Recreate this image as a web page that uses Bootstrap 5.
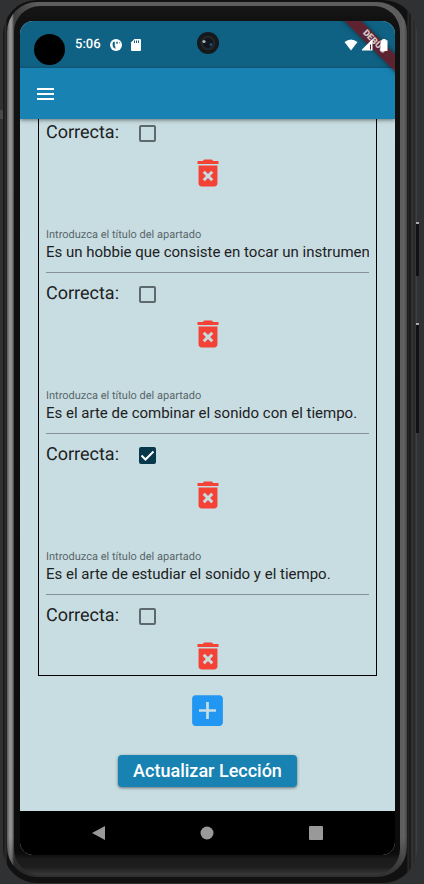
<!DOCTYPE html>
<html lang="es">
<head>
<meta charset="utf-8">
<meta name="viewport" content="width=device-width, initial-scale=1">
<title>Actualizar Lección</title>
<link href="https://cdn.jsdelivr.net/npm/bootstrap@5.3.0/dist/css/bootstrap.min.css" rel="stylesheet">
<style>
  body { background: #303133; font-family: Roboto, "Liberation Sans", sans-serif; color: #1c2123; text-rendering: geometricPrecision; }
  svg { display: block; }

  /* Device frame, from the outside in */
  .shell { margin: 0 7px 2px 3px; padding: 2px 10px 6px 4px; border-radius: 34px;
    background: linear-gradient(to right, #141414 0, #303030 3px, #111 4px, #111 calc(100% - 10px), #2d2d2d calc(100% - 9px), #151515 calc(100% - 7px), #383838 calc(100% - 5px), #262626 calc(100% - 3px), #444 100%); }
  .rim { padding: 4px 7px 2px 7px; border-radius: 30px;
    background: linear-gradient(to bottom, transparent 0, transparent calc(100% - 40px), rgba(0, 0, 0, .5) 100%),
      linear-gradient(to right, #5a5a5a 0, #959595 3px, #8a8a8a 5px, #3c3c3c 7px, #5d5d5d 30px, #5d5d5d calc(100% - 7px), #626262 calc(100% - 3px), #454545 100%); }
  .bezel { padding: 15px 5px 20px 6px; border-radius: 26px;
    background: linear-gradient(to bottom, #161616 0, #111 15px, #0c0c0c calc(100% - 22px), #1b1b1b calc(100% - 16px), #1d1d1d calc(100% - 8px), #393939 100%); }
  .side-key { position: absolute; right: 5px; width: 3px; background: #111; border-top: 2px solid #aaa; }
  .key-power { top: 222px; height: 54px; }
  .key-volume { top: 323px; height: 110px; }
  .seam { position: absolute; left: 0; top: 110px; width: 3px; height: 9px; background: #484848; }

  .screen { background: #c8dde1; border-radius: 13px; }
  .status { height: 47px; background: #106284; padding: 0 7px 0 14px; }
  .punch { width: 31px; height: 31px; background: #000; margin-top: 9px; }
  .clock { font-size: 13px; line-height: 16px; font-weight: 500; margin-left: 10px; margin-right: 9px; }
  .status-icon { position: relative; z-index: 4; }
  .lens { position: absolute; left: 50%; top: 11px; margin-left: -11px; }
  .ribbon { position: absolute; top: 15px; right: -29px; width: 100px; height: 12px; line-height: 12px;
    transform: rotate(45deg); background: rgba(112, 20, 28, .8); box-shadow: 0 0 5px rgba(0, 0, 0, .5);
    color: #d6c5c9; font-size: 9px; font-weight: 900; z-index: 3; }
  .app-bar { height: 51px; background: #1883b2; padding: 0 14px; box-shadow: 0 1px 4px rgba(0, 0, 0, .5); z-index: 2; }

  .answers { margin: 0 18px; padding: 0 7px 1px; border: 1px solid #000; border-top: 0; }
  .tick-row { height: 28px; font-size: 18px; line-height: 28px; }
  .tick-row label { width: 93px; }
  .tick-row .form-check-input { width: 17px; height: 17px; margin: 0; border: 2px solid #5d696d; border-radius: 2px; background-color: transparent; }
  .tick-row .form-check-input:checked { background-color: #07374a; border-color: #07374a; background-size: 17px;
    background-image: url("data:image/svg+xml,%3csvg xmlns='http://www.w3.org/2000/svg' viewBox='0 0 17 17'%3e%3cpath d='M2.500 8.500 6.500 12.500 14.500 4.500' fill='none' stroke='%23fff' stroke-width='2'/%3e%3c/svg%3e"); }
  .tool { margin-top: 8px; }
  .field { margin-top: 37px; height: 45px; border-bottom: 1px solid #859398; margin-bottom: 7px; }
  .field label { font-size: 11px; line-height: 14px; color: #59666a; }
  .field .form-control { font-size: 15px; line-height: 20px; height: 20px; color: #1c2123; }
  .add { margin-top: 14px; }
  .save { margin-top: 24px; margin-bottom: 24px; padding: 4px 15px; line-height: 24px; font-size: 18px; font-weight: 500;
    background: #1883b2; border-radius: 4px; box-shadow: 0 1px 3px rgba(0, 0, 0, .5); }
  .sys-nav { height: 44px; background: #000; padding: 0 72px 0 71px; }
</style>
<script src="https://cdn.jsdelivr.net/npm/bootstrap@5.3.0/dist/js/bootstrap.bundle.min.js"></script>
</head>
<body class="position-relative">
<svg class="d-none" aria-hidden="true">
  <symbol id="trash" viewBox="0 0 24 24"><path d="M5.700 19c0 1.100.9 2 2 2h8.600c1.100 0 2-.9 2-2V7H5.700v12zm2.760-7.120 1.410-1.410L12 12.590l2.120-2.120 1.410 1.410L13.410 14l2.120 2.120-1.410 1.410L12 15.410l-2.120 2.120-1.410-1.410L10.590 14l-2.130-2.120zM15.500 4l-1-1h-5l-1 1H5v2h14V4z"/></symbol>
</svg>
<span class="seam"></span>
<span class="side-key key-power"></span>
<span class="side-key key-volume"></span>
<div class="shell">
<div class="rim">
<div class="bezel">
<div class="screen d-flex flex-column position-relative overflow-hidden">
  <div class="status d-flex align-items-center text-white">
    <span class="punch rounded-circle"></span>
    <span class="clock">5:06</span>
    <svg width="12" height="12" viewBox="0 0 12 12"><circle cx="6" cy="6" r="6" fill="#fff"/><path d="M3.200 2.800Q1.600 5.500 3 8l2.400 2V7.600H4.800V2.800zM6.300 2.700h1.500v2H6.300zM9 2.700l1 1.500H9z" fill="#106284"/></svg>
    <svg class="ms-2" width="12" height="12" viewBox="0 0 12 12"><path d="M4.500 0H10q1 0 1 1v10q0 1-1 1H2q-1 0-1-1V3.500z" fill="#fff"/><path d="M4.500 1.500v2.500M6.500 1.500v2.500M8.500 1.500v2.500" stroke="#106284"/></svg>
    <svg class="status-icon ms-auto" width="14" height="12" viewBox="0 0 14 12"><path d="M.5 3Q7-2 13.500 3L7 11.500z" fill="#fff"/></svg>
    <svg class="status-icon ms-1 me-1" width="14" height="12" viewBox="0 0 14 12"><path d="M-1 11.500 10.500 0v11.500z" fill="#fff"/><path d="M8.500 5.500v5" stroke="#571f2c"/></svg>
    <svg class="status-icon" width="8" height="12" viewBox="0 0 8 12"><path d="M2.300 0h3.400v1.200H7.500V12H.5V1.200h1.800z" fill="#fff"/></svg>
  </div>
  <svg class="lens" width="22" height="22" viewBox="0 0 22 22"><circle cx="11" cy="11" r="11" fill="#15191b"/><circle cx="11" cy="11" r="7.500" fill="#20262a"/><circle cx="11" cy="11" r="5" fill="#10161b"/><circle cx="7" cy="9.500" r="1.600" fill="#aeb9bd"/><circle cx="14" cy="12.500" r="1.500" fill="#244d77"/></svg>
  <div class="ribbon text-center">DEBUG</div>

  <header class="app-bar d-flex align-items-center position-relative">
    <button type="button" class="btn border-0 p-0" aria-label="Menú">
      <svg width="22" height="22" viewBox="0 0 22 22"><path d="M3 6h17M3 11h17M3 16h17" stroke="#fff" stroke-width="2"/></svg>
    </button>
  </header>

  <main class="d-flex flex-column">
    <section class="answers">
      <div class="tick-row d-flex align-items-center"><label for="ok1">Correcta:</label><input class="form-check-input" type="checkbox" id="ok1"></div>
      <div class="tool d-flex justify-content-center"><button type="button" class="btn border-0 p-0" aria-label="Eliminar"><svg width="36" height="36" fill="#f44336"><use href="#trash"/></svg></button></div>
      <div class="field"><label class="d-block" for="t2">Introduzca el título del apartado</label><input class="form-control border-0 rounded-0 bg-transparent p-0 shadow-none" id="t2" value="Es un hobbie que consiste en tocar un instrumento"></div>

      <div class="tick-row d-flex align-items-center"><label for="ok2">Correcta:</label><input class="form-check-input" type="checkbox" id="ok2"></div>
      <div class="tool d-flex justify-content-center"><button type="button" class="btn border-0 p-0" aria-label="Eliminar"><svg width="36" height="36" fill="#f44336"><use href="#trash"/></svg></button></div>
      <div class="field"><label class="d-block" for="t3">Introduzca el título del apartado</label><input class="form-control border-0 rounded-0 bg-transparent p-0 shadow-none" id="t3" value="Es el arte de combinar el sonido con el tiempo."></div>

      <div class="tick-row d-flex align-items-center"><label for="ok3">Correcta:</label><input class="form-check-input" type="checkbox" id="ok3" checked></div>
      <div class="tool d-flex justify-content-center"><button type="button" class="btn border-0 p-0" aria-label="Eliminar"><svg width="36" height="36" fill="#f44336"><use href="#trash"/></svg></button></div>
      <div class="field"><label class="d-block" for="t4">Introduzca el título del apartado</label><input class="form-control border-0 rounded-0 bg-transparent p-0 shadow-none" id="t4" value="Es el arte de estudiar el sonido y el tiempo."></div>

      <div class="tick-row d-flex align-items-center"><label for="ok4">Correcta:</label><input class="form-check-input" type="checkbox" id="ok4"></div>
      <div class="tool d-flex justify-content-center"><button type="button" class="btn border-0 p-0" aria-label="Eliminar"><svg width="36" height="36" fill="#f44336"><use href="#trash"/></svg></button></div>
    </section>

    <button type="button" class="add btn border-0 p-0 align-self-center" aria-label="Añadir">
      <svg width="41" height="41" viewBox="0 0 24 24"><path fill="#2196f3" d="M19 3H5c-1.110 0-2 .9-2 2v14c0 1.100.89 2 2 2h14c1.100 0 2-.9 2-2V5c0-1.100-.9-2-2-2zm-2 9.800h-4.200V17h-1.600v-4.200H7v-1.600h4.200V7h1.600v4.200H17z"/></svg>
    </button>
    <button type="button" class="save btn border-0 text-white align-self-center">Actualizar Lección</button>
  </main>

  <nav class="sys-nav d-flex align-items-center justify-content-between">
    <button type="button" class="btn border-0 p-0" aria-label="Atrás"><svg width="14" height="14" viewBox="0 0 14 14"><path d="M14 0v14L1 7z" fill="#999"/></svg></button>
    <button type="button" class="btn border-0 p-0" aria-label="Inicio"><svg width="14" height="14" viewBox="0 0 14 14"><circle cx="7" cy="7" r="6.500" fill="#999"/></svg></button>
    <button type="button" class="btn border-0 p-0" aria-label="Recientes"><svg width="14" height="14" viewBox="0 0 14 14"><rect width="14" height="14" rx="1" fill="#999"/></svg></button>
  </nav>
</div>
</div>
</div>
</div>
</body>
</html>
